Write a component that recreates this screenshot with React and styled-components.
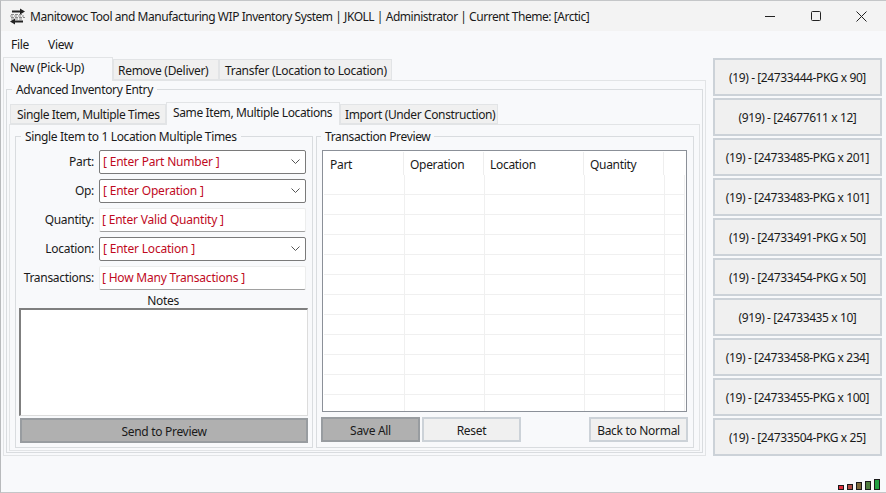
import React from "react";
import styled, { createGlobalStyle } from "styled-components";

const Global = createGlobalStyle`
  html, body { margin: 0; padding: 0; background: #f8f9fb; overflow: hidden; }
  * { box-sizing: border-box; }
  #root { width: 886px; height: 493px; }
`;

const Window = styled.div`
  position: relative;
  width: 886px;
  height: 493px;
  display: flex;
  flex-direction: column;
  background: #f8f9fb;
  border-top: 1px solid #c4c6c8;
  border-left: 1px solid #b8babc;
  border-bottom: 1px solid #c4c6c8;
  font-family: "Noto Sans", "Open Sans", sans-serif;
  font-size: 12px;
  color: #1a1a1a;
  letter-spacing: -0.3px;
`;

const TitleBar = styled.div`
  height: 30px;
  flex: none;
  display: flex;
  align-items: center;
  background: #f3f3f3;
  padding: 0 2px 0 8px;
`;

const TitleText = styled.div`
  margin-left: 4px;
  font-size: 12px;
  letter-spacing: -0.46px;
  white-space: nowrap;
  flex: 1;
`;

const WinButton = styled.div`
  width: 45.5px;
  height: 30px;
  display: flex;
  align-items: center;
  justify-content: center;
  color: #222;
`;

const MenuBar = styled.div`
  height: 25px;
  flex: none;
  display: flex;
  align-items: center;
  gap: 19px;
  padding: 2px 0 0 10px;
`;

const MenuItem = styled.span``;

const Main = styled.div`
  display: flex;
  padding-left: 2px;
  gap: 7px;
  align-items: flex-start;
`;

const LeftColumn = styled.div`
  width: 703px;
  flex: none;
`;

const TabStrip = styled.div`
  display: flex;
  align-items: flex-end;
  height: ${(p) => p.$h}px;
  padding-left: ${(p) => p.$pad || 0}px;
  letter-spacing: ${(p) => p.$ls || -0.3}px;
  position: relative;
  z-index: 1;
`;

const Tab = styled.div`
  width: ${(p) => p.$w}px;
  height: ${(p) => (p.$active ? p.$h + 3 : p.$h)}px;
  display: flex;
  padding-top: ${(p) => (p.$active ? 1 : p.$top ?? 2)}px;
  padding-left: ${(p) => p.$pl}px;
  white-space: nowrap;
  background: ${(p) => (p.$active ? "#f8f9fb" : "#f0f0f0")};
  border: 1px solid #e2e4e6;
  border-bottom: ${(p) => (p.$active ? "none" : "1px solid #e2e4e6")};
  margin-bottom: ${(p) => (p.$active ? "-1px" : "0")};
`;

const OuterPanel = styled.div`
  height: 376px;
  border: 1px solid #e2e4e6;
  padding: 8px 2px 2px;
`;

const GroupBox = styled.div`
  position: relative;
  border: 1px solid #d9dcdf;
  height: ${(p) => p.$h}px;
  width: ${(p) => p.$w || "auto"};
  flex: ${(p) => (p.$w ? "none" : "initial")};
  padding: ${(p) => p.$pad};
`;

const Legend = styled.span`
  position: absolute;
  top: -8px;
  left: ${(p) => p.$left ?? 5}px;
  padding: 0 4px;
  line-height: 16px;
  background: #f8f9fb;
  white-space: nowrap;
  letter-spacing: -0.35px;
`;

const InnerPanel = styled.div`
  height: 327px;
  border: 1px solid #e2e4e6;
  padding: 11px 5px 2px;
  display: flex;
  gap: 3px;
`;

const FormGrid = styled.div`
  display: grid;
  grid-template-columns: 78px 207px;
  column-gap: 5px;
  row-gap: 5px;
  align-items: center;
`;

const FieldLabel = styled.label`
  text-align: right;
  white-space: nowrap;
  padding-bottom: 1px;
`;

const Combo = styled.div`
  height: 24px;
  display: flex;
  align-items: center;
  justify-content: space-between;
  padding: 0 5px 1px 3px;
  background: #fff;
  border: 1px solid #7a7a7a;
  border-radius: 2px;
  color: #c00a1e;
  letter-spacing: -0.2px;
`;

const TextBox = styled.div`
  height: 24px;
  display: flex;
  align-items: center;
  padding: 0 2px 1px;
  background: #fff;
  border: 1px solid #eceded;
  border-bottom: 1px solid #a0a0a0;
  border-radius: 2px;
  color: #c00a1e;
  letter-spacing: -0.2px;
`;

const NotesLabel = styled.div`
  text-align: center;
  line-height: 12px;
  margin-top: 5px;
  padding-right: 2px;
`;

const NotesArea = styled.div`
  height: 108px;
  margin: 1px 4px 2px 3px;
  background: #fff;
  border-top: 2px solid #7f7f7f;
  border-left: 2px solid #7f7f7f;
  border-right: 1px solid #dcdcdc;
  border-bottom: 1px solid #dcdcdc;
`;

const ActionButton = styled.div`
  width: ${(p) => p.$w}px;
  height: 25px;
  flex: none;
  display: flex;
  align-items: center;
  justify-content: center;
  padding-top: 1px;
  border: 2px solid ${(p) => (p.$dark ? "#989ca0" : "#ccd2d8")};
  background: ${(p) => (p.$dark ? "#b0b0b0" : "#f0f0f0")};
  margin-left: ${(p) => p.$ml || 0}px;
`;

const SendRow = styled.div`
  padding-left: 4px;
`;

const Table = styled.div`
  width: 365px;
  height: 262px;
  margin-left: 5px;
  overflow: hidden;
  background: #fff;
  border: 1px solid #8b9098;
  padding: 0 1px;
`;

const HeaderRow = styled.div`
  display: grid;
  grid-template-columns: 80px 80px 100px 80px 1fr;
  height: 24px;
  padding-top: 1px;
`;

const HeaderCell = styled.div`
  padding: 4px 0 0 6px;
  border-right: ${(p) => (p.$last ? "none" : "1px solid #eeeeee")};
`;

const DataRow = styled.div`
  display: grid;
  grid-template-columns: 81px 80px 100px 80px 20px;
  height: 20px;
  border-bottom: 1px solid #f0f0f0;
`;

const DataCell = styled.div`
  border-right: 1px solid #f0f0f0;
`;

const PreviewActions = styled.div`
  display: flex;
  margin: 5px 0 0 4px;
`;

const SideColumn = styled.div`
  width: 169px;
  flex: none;
  margin-top: 2px;
  display: flex;
  flex-direction: column;
  gap: 2px;
`;

const QueueButton = styled.div`
  height: 38px;
  display: flex;
  align-items: center;
  justify-content: center;
  background: #f0f0f0;
  border: 2px solid #ccd2d8;
  white-space: nowrap;
  letter-spacing: -0.4px;
`;

const Signal = styled.div`
  position: absolute;
  right: 6px;
  bottom: 2px;
  display: flex;
  align-items: flex-end;
  gap: 3px;
`;

const SignalBar = styled.div`
  width: 6px;
  height: ${(p) => p.$h}px;
  background: ${(p) => p.$c};
  border: 1px solid #1a1a1a;
`;

const Chevron = () => (
  <svg width="9" height="6" viewBox="0 0 9 6" fill="none" stroke="#555" strokeWidth="1">
    <path d="M0.5 0.5 L4.5 4.5 L8.5 0.5" />
  </svg>
);

const AppIcon = () => (
  <svg width="17" height="17" viewBox="0 0 17 17">
    <path d="M3 2.5 H11 V0.5 L16 3.5 L11 6.5 V4.5 H3 Z" fill="#222" />
    <path d="M14 12.5 H6 V10.5 L1 13.5 L6 16.5 V14.5 H14 Z" fill="#222" />
    <path d="M2 6.5h12M1 8h14M2 9.5h14M2 11h12" stroke="#8c8c8c" strokeWidth="1" strokeDasharray="3 1" />
  </svg>
);

const queue = [
  "(19) - [24733444-PKG x 90]",
  "(919) - [24677611 x 12]",
  "(19) - [24733485-PKG x 201]",
  "(19) - [24733483-PKG x 101]",
  "(19) - [24733491-PKG x 50]",
  "(19) - [24733454-PKG x 50]",
  "(919) - [24733435 x 10]",
  "(19) - [24733458-PKG x 234]",
  "(19) - [24733455-PKG x 100]",
  "(19) - [24733504-PKG x 25]",
];

const bars = [
  [5, "#e0303f"],
  [6, "#b05048"],
  [8, "#7d6a3c"],
  [9, "#4f7d3f"],
  [11, "#22a044"],
];

export default function App() {
  return (
    <Window>
      <Global />
      <TitleBar>
        <AppIcon />
        <TitleText>
          Manitowoc Tool and Manufacturing WIP Inventory System | JKOLL | Administrator | Current Theme: [Arctic]
        </TitleText>
        <WinButton>
          <svg width="10" height="10" viewBox="0 0 10 10" stroke="#222" fill="none">
            <path d="M0 5.5H10" />
          </svg>
        </WinButton>
        <WinButton>
          <svg width="10" height="10" viewBox="0 0 10 10" stroke="#222" fill="none">
            <rect x="0.5" y="0.5" width="9" height="9" rx="1" />
          </svg>
        </WinButton>
        <WinButton>
          <svg width="11" height="11" viewBox="0 0 11 11" stroke="#222" fill="none">
            <path d="M0.5 0.5L10.5 10.5M10.5 0.5L0.5 10.5" />
          </svg>
        </WinButton>
      </TitleBar>
      <MenuBar>
        <MenuItem>File</MenuItem>
        <MenuItem>View</MenuItem>
      </MenuBar>
      <Main>
        <LeftColumn>
          <TabStrip $h={24}>
            <Tab $w={110} $h={21} $pl={6} $active>New (Pick-Up)</Tab>
            <Tab $w={106} $h={21} $pl={4}>Remove (Deliver)</Tab>
            <Tab $w={173} $h={21} $pl={5}>Transfer (Location to Location)</Tab>
          </TabStrip>
          <OuterPanel>
            <GroupBox $h={364} $pad="11px 2px 2px 2px">
              <Legend>Advanced Inventory Entry</Legend>
              <TabStrip $h={23} $pad={1} $ls={-0.38}>
                <Tab $w={156} $h={20} $pl={6} $top={1}>Single Item, Multiple Times</Tab>
                <Tab $w={174} $h={20} $pl={6} $active>Same Item, Multiple Locations</Tab>
                <Tab $w={158} $h={20} $pl={4} $top={1}>Import (Under Construction)</Tab>
              </TabStrip>
              <InnerPanel>
                <GroupBox $w="298px" $h="312" $pad="13px 0 0 0">
                  <Legend>Single Item to 1 Location Multiple Times</Legend>
                  <FormGrid>
                    <FieldLabel>Part:</FieldLabel>
                    <Combo>[ Enter Part Number ]<Chevron /></Combo>
                    <FieldLabel>Op:</FieldLabel>
                    <Combo>[ Enter Operation ]<Chevron /></Combo>
                    <FieldLabel>Quantity:</FieldLabel>
                    <TextBox>[ Enter Valid Quantity ]</TextBox>
                    <FieldLabel>Location:</FieldLabel>
                    <Combo>[ Enter Location ]<Chevron /></Combo>
                    <FieldLabel>Transactions:</FieldLabel>
                    <TextBox>[ How Many Transactions ]</TextBox>
                  </FormGrid>
                  <NotesLabel>Notes</NotesLabel>
                  <NotesArea />
                  <SendRow>
                    <ActionButton $w={288} $dark>Send to Preview</ActionButton>
                  </SendRow>
                </GroupBox>
                <GroupBox $w="378px" $h="312" $pad="13px 0 0 0">
                  <Legend $left={4}>Transaction Preview</Legend>
                  <Table>
                    <HeaderRow>
                      <HeaderCell>Part</HeaderCell>
                      <HeaderCell>Operation</HeaderCell>
                      <HeaderCell>Location</HeaderCell>
                      <HeaderCell>Quantity</HeaderCell>
                      <HeaderCell $last />
                    </HeaderRow>
                    {Array.from({ length: 12 }).map((_, r) => (
                      <DataRow key={r}>
                        <DataCell />
                        <DataCell />
                        <DataCell />
                        <DataCell />
                        <DataCell />
                      </DataRow>
                    ))}
                  </Table>
                  <PreviewActions>
                    <ActionButton $w={99} $dark>Save All</ActionButton>
                    <ActionButton $w={99} $ml={2}>Reset</ActionButton>
                    <ActionButton $w={99} $ml={68}>Back to Normal</ActionButton>
                  </PreviewActions>
                </GroupBox>
              </InnerPanel>
            </GroupBox>
          </OuterPanel>
        </LeftColumn>
        <SideColumn>
          {queue.map((q) => (
            <QueueButton key={q}>{q}</QueueButton>
          ))}
        </SideColumn>
      </Main>
      <Signal>
        {bars.map(([h, c]) => (
          <SignalBar key={c} $h={h} $c={c} />
        ))}
      </Signal>
    </Window>
  );
}
